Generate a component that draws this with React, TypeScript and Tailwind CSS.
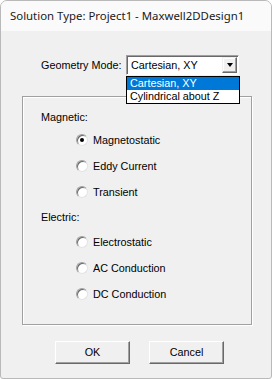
import { useState } from "react"

const radios = {
  magnetic: ["Magnetostatic", "Eddy Current", "Transient"],
  electric: ["Electrostatic", "AC Conduction", "DC Conduction"],
}

function Radio({ label, checked, onClick }: { label: string; checked: boolean; onClick: () => void }) {
  return (
    <div className="flex h-[26px] items-center pl-[53px] cursor-default" onClick={onClick}>
      <div className="flex h-[12px] w-[12px] items-center justify-center rounded-full border border-t-[#a0a0a0] border-l-[#a0a0a0] border-b-[#e3e3e3] border-r-[#e3e3e3] bg-white shadow-[inset_1px_1px_0_#696969]">
        {checked && <div className="h-[4px] w-[4px] rounded-full bg-black" />}
      </div>
      <span className="ml-[5px]">{label}</span>
    </div>
  )
}

export default function App() {
  const [mode, setMode] = useState("Magnetostatic")

  return (
    <div className="h-[379px] w-[272px] bg-white">
      <div
        className="flex h-[379px] w-[272px] flex-col overflow-hidden rounded-t-[7px] rounded-b-[3px] border border-[#b9b9b9] bg-[#f0f0f0] text-[10.8px] text-black"
        style={{ fontFamily: '"Liberation Sans", Arial, sans-serif' }}
      >
        {/* Title bar */}
        <div
          className="flex h-[30px] shrink-0 items-center bg-[#fafafa] pl-[9px] text-[11.4px] text-[#1a1a1a]"
          style={{ fontFamily: '"Noto Sans", "Open Sans", sans-serif' }}
        >
          Solution Type: Project1 - Maxwell2DDesign1
        </div>

        {/* Geometry mode */}
        <div className="relative mt-[24px] flex h-[20px] items-center pl-[40px]">
          <span className="w-[85px]">Geometry Mode:</span>
          <div className="flex h-[20px] w-[113px] items-center border border-t-[#a0a0a0] border-l-[#a0a0a0] border-b-white border-r-white bg-white shadow-[inset_1px_1px_0_#696969]">
            <span className="ml-[4px] flex-1">Cartesian, XY</span>
            <div className="mr-[1px] flex h-[16px] w-[15px] items-center justify-center border border-t-[#f0f0f0] border-l-[#f0f0f0] border-b-[#696969] border-r-[#696969] bg-[#f0f0f0] shadow-[inset_-1px_-1px_0_#a0a0a0,inset_1px_1px_0_#fff]">
              <div className="h-0 w-0 border-x-[3.5px] border-t-[4px] border-x-transparent border-t-black" />
            </div>
          </div>

          {/* Open drop-down list */}
          <div className="absolute left-[125px] top-[21px] z-10 w-[114px] border border-black bg-white">
            <div className="flex h-[13px] items-center bg-[#0078d7] pl-[3px] text-white">Cartesian, XY</div>
            <div className="flex h-[13px] items-center pl-[3px]">Cylindrical about Z</div>
          </div>
        </div>

        {/* Group box */}
        <div className="ml-[21px] mt-[21px] h-[229px] w-[230px] border border-[#a0a0a0] pt-[10px] shadow-[inset_1px_1px_0_#fff,1px_1px_0_#fff]">
          <div className="flex h-[20px] items-center pl-[18px]">Magnetic:</div>
          {radios.magnetic.map((r) => (
            <Radio key={r} label={r} checked={mode === r} onClick={() => setMode(r)} />
          ))}
          <div className="flex h-[24px] items-center pl-[18px]">Electric:</div>
          {radios.electric.map((r) => (
            <Radio key={r} label={r} checked={mode === r} onClick={() => setMode(r)} />
          ))}
        </div>

        {/* Buttons */}
        <div className="mt-[16px] flex gap-[19px] pl-[54px]">
          <button className="h-[23px] w-[75px] border border-t-white border-l-white border-b-[#696969] border-r-[#696969] bg-[#f0f0f0] shadow-[inset_-1px_-1px_0_#a0a0a0]">
            OK
          </button>
          <button className="h-[23px] w-[75px] border border-t-white border-l-white border-b-[#696969] border-r-[#696969] bg-[#f0f0f0] shadow-[inset_-1px_-1px_0_#a0a0a0]">
            Cancel
          </button>
        </div>
      </div>
    </div>
  )
}
